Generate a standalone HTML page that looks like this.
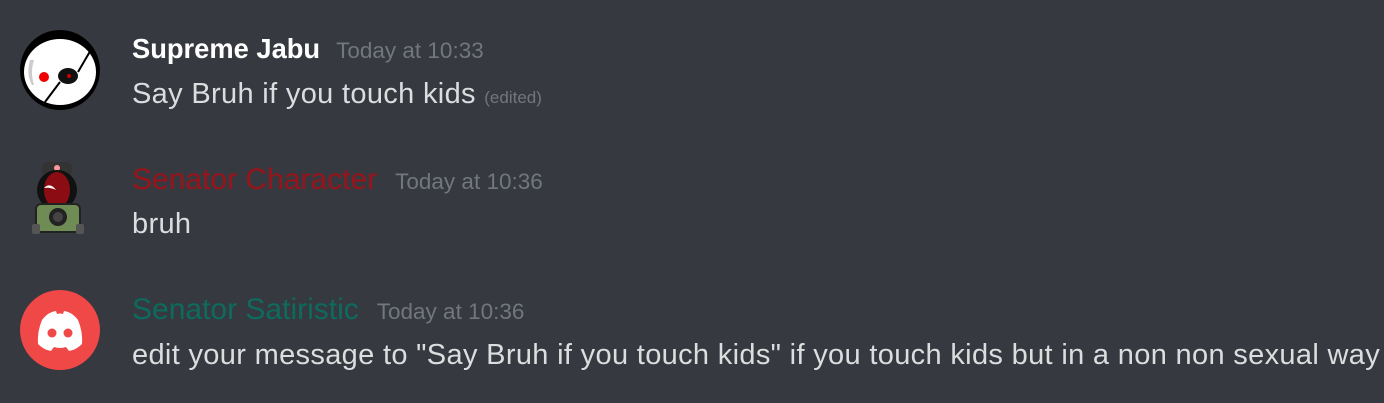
<!DOCTYPE html>
<html><head><meta charset="utf-8"><style>
body{margin:0;width:1384px;height:403px;background:#36393f;overflow:hidden;font-family:"Liberation Sans",sans-serif;position:relative}
.n{position:absolute;left:132px;font-size:30px;white-space:nowrap}
.n span{font-size:22.5px;color:#72767d;margin-left:18px;font-weight:normal;letter-spacing:0}
.m{position:absolute;left:132px;font-size:29px;letter-spacing:0.33px;color:#dcddde;white-space:nowrap}
.e{font-size:17px;color:#72767d;letter-spacing:0}
</style></head><body>
<svg style="position:absolute;left:20px;top:30px" width="80" height="80" viewBox="0 0 80 80">
<circle cx="40" cy="40" r="40" fill="#000"/><ellipse cx="40" cy="42" rx="36" ry="33" fill="#fff"/>
<path d="M10 30 Q6 45 12 55 L14 55 Q10 42 14 30Z" fill="#ccc"/>
<circle cx="24" cy="47" r="5" fill="#e00"/>
<ellipse cx="48" cy="46" rx="10" ry="8" fill="#111"/><circle cx="49" cy="46" r="2" fill="#c00"/>
<path d="M72 18 L58 42 M40 52 L25 72" stroke="#000" stroke-width="2"/>
</svg>
<svg style="position:absolute;left:30px;top:160px" width="60" height="76" viewBox="0 0 60 76">
<rect x="12" y="2" width="30" height="14" rx="5" fill="#333"/><circle cx="27" cy="8" r="3" fill="#f99"/>
<circle cx="27" cy="30" r="20" fill="#111"/><ellipse cx="27" cy="30" rx="13" ry="18" fill="#8b0d13"/>
<path d="M14 28 Q20 22 26 30 Q20 27 14 28Z" fill="#fff"/>
<rect x="6" y="44" width="44" height="28" rx="5" fill="#6e8c54" stroke="#222" stroke-width="2"/>
<circle cx="28" cy="57" r="9" fill="#222"/><circle cx="28" cy="57" r="5" fill="#444"/>
<rect x="2" y="64" width="8" height="10" rx="2" fill="#555"/><rect x="46" y="64" width="8" height="10" rx="2" fill="#555"/>
</svg>
<svg style="position:absolute;left:20px;top:290px" width="80" height="80" viewBox="0 0 80 80">
<circle cx="40" cy="40" r="40" fill="#f04747"/>
<path d="M22 30 Q28 22 36 21 L37 24 Q40 23 43 24 L44 21 Q52 22 58 30 Q63 42 62 54 Q56 60 49 61 L46 57 Q40 59 34 57 L31 61 Q24 60 18 54 Q17 42 22 30Z" fill="#fff"/>
<circle cx="32" cy="43" r="4.5" fill="#f04747"/><circle cx="48" cy="43" r="4.5" fill="#f04747"/>
</svg>
<div class="n" style="top:33px;color:#fff;font-weight:bold;font-size:27.3px">Supreme Jabu<span style="margin-left:16px">Today at 10:33</span></div>
<div class="m" style="top:78px">Say Bruh if you touch kids <span class="e">(edited)</span></div>
<div class="n" style="top:163px;color:#99141a">Senator Character<span>Today at 10:36</span></div>
<div class="m" style="top:208px">bruh</div>
<div class="n" style="top:293px;color:#0d6b5e">Senator Satiristic<span>Today at 10:36</span></div>
<div class="m" style="top:339px">edit your message to "Say Bruh if you touch kids" if you touch kids but in a non non sexual way</div>
</body></html>
